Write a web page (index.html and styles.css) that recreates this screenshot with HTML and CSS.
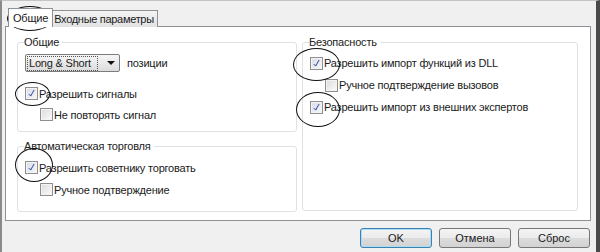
FILE: index.html
```html
<!DOCTYPE html>
<html lang="ru">
<head>
    <meta charset="UTF-8">
    <title>Свойства эксперта</title>
    <link rel="stylesheet" href="styles.css">
</head>
<body>
    <div class="dialog">
        <div class="tabs">
            <div class="tab active">Общие</div>
            <div class="tab">Входные параметры</div>
        </div>
        <div class="panel">
            <div class="column">
                <fieldset class="group group-common">
                    <legend>Общие</legend>
                    <div class="combo-row">
                        <div class="combo">
                            <span class="combo-text">Long &amp; Short</span>
                            <span class="combo-arrow"></span>
                        </div>
                        <span>позиции</span>
                    </div>
                    <label class="check"><span class="box checked"></span>Разрешить сигналы</label>
                    <label class="check sub"><span class="box"></span>Не повторять сигнал</label>
                </fieldset>
                <fieldset class="group group-auto">
                    <legend>Автоматическая торговля</legend>
                    <label class="check"><span class="box checked"></span>Разрешить советнику торговать</label>
                    <label class="check sub"><span class="box"></span>Ручное подтверждение</label>
                </fieldset>
            </div>
            <fieldset class="group group-security">
                <legend>Безопасность</legend>
                <label class="check"><span class="box checked"></span>Разрешить импорт функций из DLL</label>
                <label class="check sub"><span class="box"></span>Ручное подтверждение вызовов</label>
                <label class="check"><span class="box checked"></span>Разрешить импорт из внешних экспертов</label>
            </fieldset>
        </div>
        <div class="buttons">
            <button class="btn default">OK</button>
            <button class="btn">Отмена</button>
            <button class="btn">Сброс</button>
        </div>
    </div>

    <!-- пометки от руки -->
    <div class="mark mark-tab"></div>
    <div class="mark mark-signals"></div>
    <div class="mark mark-trade"></div>
    <div class="mark mark-dll"></div>
    <div class="mark mark-experts"></div>
</body>
</html>
```

FILE: styles.css
```css
body {
    margin: 0;
    width: 600px;
    height: 252px;
    overflow: hidden;
    position: relative;
    font-family: "Liberation Sans", Arial, sans-serif;
    font-size: 11px;
    letter-spacing: -0.2px;
    color: #1a1a1a;
    background-color: #f0f0f0;
}
.dialog {
    box-sizing: border-box;
    height: 252px;
    padding-top: 7px;
    border-left: 2px solid #8a8a8a;
    border-right: 4px solid #4a4a4a;
    border-top: 1px solid #c4c4c4;
}
.tabs {
    display: flex;
    align-items: flex-end;
    height: 19px;
    margin-left: 6px;
    position: relative;
    z-index: 1;
}
.tab {
    box-sizing: border-box;
    height: 17px;
    padding: 2px 3px 0 1px;
    border: 1px solid #8e9196;
    border-bottom: none;
    background: linear-gradient(#f4f4f4, #e2e2e2);
    margin-left: -1px;
    letter-spacing: -0.3px;
}
.tab.active {
    height: 19px;
    padding: 3px 4px 0;
    background: #fff;
    margin-left: 0;
    letter-spacing: -0.2px;
    z-index: 2;
}
.panel {
    box-sizing: border-box;
    width: 586px;
    height: 195px;
    margin-left: 3px;
    margin-top: -1px;
    border: 1px solid #8e9196;
    background: #fff;
    display: flex;
    gap: 5px;
    padding: 9px 0 0 11px;
}
.column {
    display: flex;
    flex-direction: column;
    gap: 8px;
}
.group {
    margin: 0;
    border: 1px solid #dfe1e4;
    border-radius: 3px;
    padding: 0 0 0 7px;
    box-sizing: border-box;
}
.group legend {
    padding: 0 3px 0 0;
    margin-left: -1px;
    color: #222;
}
.group-common {
    width: 280px;
    height: 96px;
}
.group-auto {
    width: 280px;
    height: 72px;
}
.group-security {
    width: 276px;
    height: 175px;
}
.combo-row {
    display: flex;
    align-items: center;
    gap: 7px;
    margin-top: 6px;
    margin-bottom: 11px;
}
.combo {
    box-sizing: border-box;
    width: 95px;
    height: 18px;
    border: 1px solid #7d7d7d;
    border-radius: 2px;
    background: linear-gradient(#f6f6f6, #dcdcdc);
    display: flex;
    align-items: center;
    padding-left: 2px;
}
.combo-text {
    flex: 1;
    outline: 1px dotted #555;
    line-height: 13px;
    padding-left: 1px;
    margin-right: 10px;
}
.combo-arrow {
    width: 0;
    height: 0;
    border-left: 4px solid transparent;
    border-right: 4px solid transparent;
    border-top: 4px solid #111;
    margin-right: 4px;
}
.check {
    display: flex;
    align-items: center;
    height: 21px;
}
.check.sub {
    margin-left: 15px;
}
.group-auto .check:first-of-type {
    margin-top: 4px;
    height: 23px;
}
.group-security .check {
    height: 22px;
}
.group-security .check:first-of-type {
    margin-top: 4px;
}
.box {
    box-sizing: border-box;
    width: 13px;
    height: 13px;
    border: 1px solid #8f8f8f;
    background: linear-gradient(135deg, #dcdcdc, #fbfbfb);
    box-shadow: inset 0 0 0 1px #f4f4f4;
    margin-right: 1px;
    position: relative;
}
.box.checked {
    background: linear-gradient(135deg, #d6dcea, #f6f8fc);
}
.box.checked::after {
    content: "";
    position: absolute;
    left: 4px;
    top: 1px;
    width: 2px;
    height: 6px;
    border-right: 1.5px solid #45579a;
    border-bottom: 1.5px solid #45579a;
    transform: rotate(30deg);
}
.buttons {
    display: flex;
    justify-content: flex-end;
    gap: 7px;
    margin-top: 7px;
    margin-right: 6px;
}
.btn {
    box-sizing: border-box;
    width: 72px;
    height: 20px;
    border: 1px solid #777;
    border-radius: 3px;
    background: linear-gradient(#f4f4f4 0%, #ebebeb 50%, #dcdcdc 51%, #d2d2d2 100%);
    font-family: "Liberation Sans", Arial, sans-serif;
    font-size: 11px;
    color: #1a1a1a;
    padding: 0;
}
.btn.default {
    border-color: #3c7fb1;
    box-shadow: inset 0 0 0 1px #a8dff6;
}
.mark {
    position: absolute;
    border: 1.6px solid #111;
    border-radius: 50%;
    box-sizing: border-box;
}
.mark-tab { left: 7px; top: 6px; width: 46px; height: 25px; }
.mark-signals { left: 15px; top: 82px; width: 35px; height: 24px; }
.mark-trade { left: 15px; top: 148px; width: 38px; height: 34px; }
.mark-dll { left: 293px; top: 48px; width: 47px; height: 33px; }
.mark-experts { left: 296px; top: 92px; width: 44px; height: 35px; }
```
